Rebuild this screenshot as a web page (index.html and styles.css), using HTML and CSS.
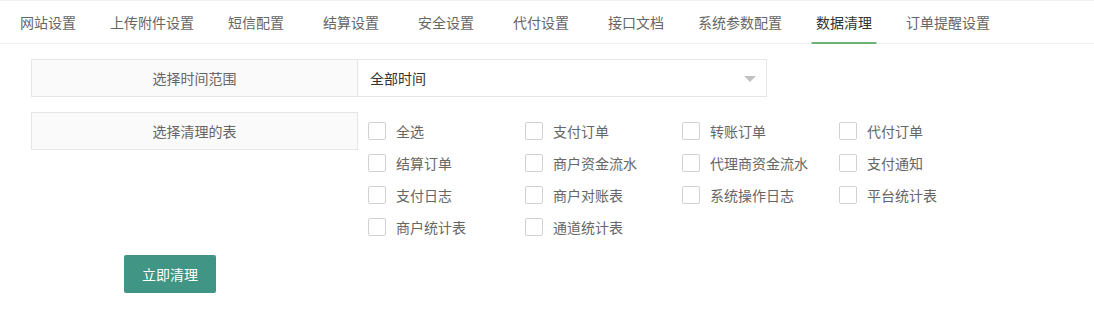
FILE: index.html
```html
<!DOCTYPE html>
<html lang="zh-CN">
<head>
<meta charset="utf-8">
<title>数据清理</title>
<link rel="stylesheet" href="styles.css">
</head>
<body>
<div class="tabs">
  <ul class="tab-list">
    <li class="tab">网站设置</li>
    <li class="tab">上传附件设置</li>
    <li class="tab tab-wide">短信配置</li>
    <li class="tab tab-wide">结算设置</li>
    <li class="tab tab-wide">安全设置</li>
    <li class="tab tab-wide">代付设置</li>
    <li class="tab">接口文档</li>
    <li class="tab">系统参数配置</li>
    <li class="tab tab-active"><span class="tab-label">数据清理</span></li>
    <li class="tab">订单提醒设置</li>
  </ul>
</div>

<form class="form">
  <div class="form-row">
    <div class="form-label">选择时间范围</div>
    <div class="select">
      <span class="select-value">全部时间</span>
      <span class="select-arrow"></span>
    </div>
  </div>

  <div class="form-row">
    <div class="form-label">选择清理的表</div>
    <div class="checks">
      <label class="check"><span class="check-box"></span><span class="check-text">全选</span></label>
      <label class="check"><span class="check-box"></span><span class="check-text">支付订单</span></label>
      <label class="check"><span class="check-box"></span><span class="check-text">转账订单</span></label>
      <label class="check"><span class="check-box"></span><span class="check-text">代付订单</span></label>
      <label class="check"><span class="check-box"></span><span class="check-text">结算订单</span></label>
      <label class="check"><span class="check-box"></span><span class="check-text">商户资金流水</span></label>
      <label class="check"><span class="check-box"></span><span class="check-text">代理商资金流水</span></label>
      <label class="check"><span class="check-box"></span><span class="check-text">支付通知</span></label>
      <label class="check"><span class="check-box"></span><span class="check-text">支付日志</span></label>
      <label class="check"><span class="check-box"></span><span class="check-text">商户对账表</span></label>
      <label class="check"><span class="check-box"></span><span class="check-text">系统操作日志</span></label>
      <label class="check"><span class="check-box"></span><span class="check-text">平台统计表</span></label>
      <label class="check"><span class="check-box"></span><span class="check-text">商户统计表</span></label>
      <label class="check"><span class="check-box"></span><span class="check-text">通道统计表</span></label>
    </div>
  </div>

  <div class="actions">
    <button type="button" class="btn">立即清理</button>
  </div>
</form>
</body>
</html>
```

FILE: styles.css
```css
* {
  box-sizing: border-box;
}

body {
  margin: 0;
  background: #fff;
  font-family: "Noto Sans CJK SC", "Noto Sans", sans-serif;
  font-size: 14px;
  color: #666;
}

.tabs {
  border-top: 1px solid #f2f2f2;
  border-bottom: 1px solid #f2f2f2;
}

.tab-list {
  display: flex;
  margin: 0;
  padding: 0 0 0 5px;
  list-style: none;
  height: 42px;
}

.tab {
  position: relative;
  padding: 0 15px;
  margin-right: 4px;
  line-height: 42px;
  color: #666;
  white-space: nowrap;
}

.tab-wide {
  padding-right: 20px;
}

.tab-active {
  color: #333;
}

.tab-label {
  position: relative;
  display: inline-block;
}

.tab-label::after {
  content: "";
  position: absolute;
  left: 50%;
  bottom: -1px;
  width: 65px;
  height: 2px;
  transform: translateX(-50%);
  background: #6db27a;
}

.form {
  margin: 15px 0 0 31px;
}

.form-row {
  display: flex;
  align-items: flex-start;
  margin-bottom: 15px;
}

.form-row + .form-row {
  margin-bottom: 12px;
}

.form-label {
  width: 327px;
  height: 38px;
  line-height: 36px;
  border: 1px solid #e6e6e6;
  background: #fafafa;
  text-align: center;
  color: #666;
  flex: none;
}

.select {
  position: relative;
  width: 409px;
  height: 38px;
  border: 1px solid #e6e6e6;
  border-left: 0;
  padding-left: 12px;
  line-height: 36px;
  color: #333;
}

.select-arrow {
  position: absolute;
  right: 10px;
  top: 16px;
  width: 0;
  height: 0;
  border-left: 6px solid transparent;
  border-right: 6px solid transparent;
  border-top: 6px solid #c2c2c2;
}

.checks {
  display: grid;
  grid-template-columns: repeat(4, 157px);
  grid-auto-rows: 32px;
  padding: 3px 0 0 10px;
}

.check {
  display: flex;
  align-items: center;
  color: #666;
  white-space: nowrap;
}

.check-box {
  width: 18px;
  height: 18px;
  border: 1px solid #d2d2d2;
  border-radius: 2px;
  background: #fff;
  flex: none;
}

.check-text {
  margin-left: 10px;
}

.actions {
  padding-left: 93px;
}

.btn {
  width: 92px;
  height: 38px;
  border: 0;
  border-radius: 2px;
  background: #419585;
  color: #fff;
  font-family: inherit;
  font-size: 14px;
  padding: 0;
  cursor: pointer;
}
```
